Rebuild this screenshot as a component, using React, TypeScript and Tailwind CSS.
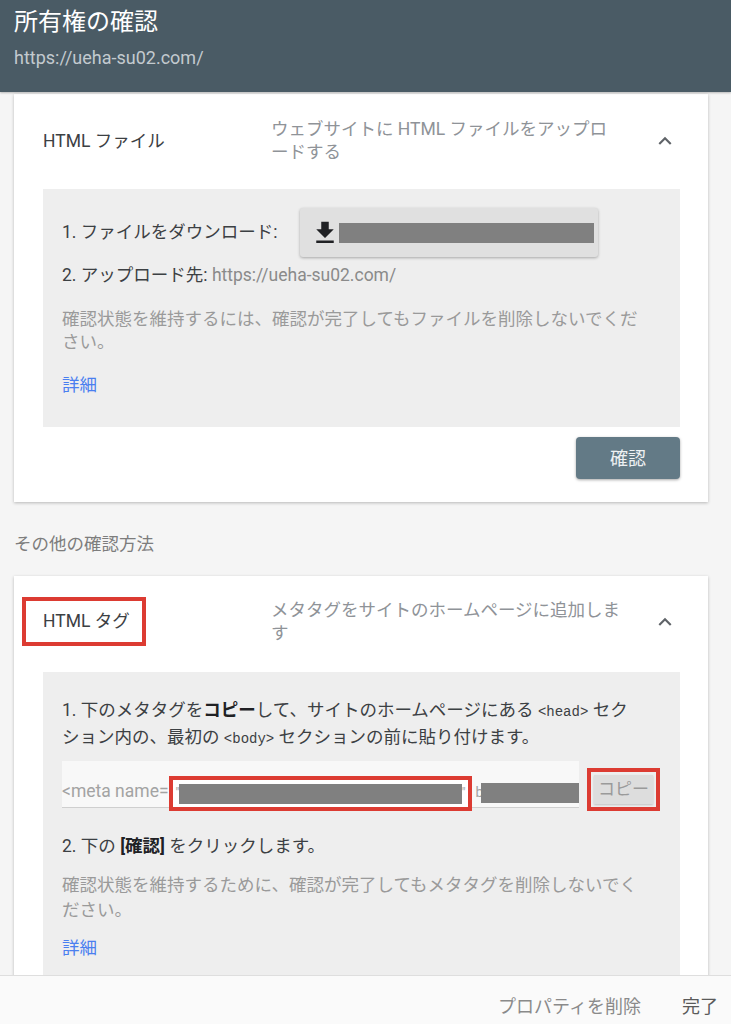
const font = "font-['Roboto','Noto_Sans_CJK_JP',sans-serif]"

function ExpandLess() {
  return (
    <svg viewBox="0 0 24 24" className="w-[26px] h-[26px] fill-[#5f6368] shrink-0">
      <path d="M12 8l-6 6 1.41 1.41L12 10.83l4.59 4.58L18 14z" />
    </svg>
  )
}

function DownloadIcon() {
  return (
    <svg viewBox="0 0 24 24" className="w-[30px] h-[30px] fill-[#202124] shrink-0">
      <path d="M19 9h-4V3H9v6H5l7 7 7-7zM5 18v2h14v-2H5z" />
    </svg>
  )
}

export default function App() {
  return (
    <div className={`${font} h-[1024px] w-full flex flex-col overflow-hidden bg-[#f5f5f5] text-[17.5px] leading-[23px] text-[#3c4043]`}>
      {/* header */}
      <header className="h-[92px] shrink-0 bg-[#4a5b65] px-[14px] pt-[6px] shadow-[0_1px_2px_rgba(0,0,0,0.25)] z-10">
        <h1 className="text-[24px] leading-[32px] text-white">所有権の確認</h1>
        <p className="mt-[8px] text-[18px] leading-[24px] text-[#c3cacf]">https://ueha-su02.com/</p>
      </header>

      <main className="flex-1 overflow-hidden pl-[14px] pr-[23px]">
        {/* html file card */}
        <section className="mt-[2px] bg-white pl-[29px] pr-[28px] pt-[24px] pb-[23px] shadow-[0_1px_3px_rgba(0,0,0,0.25)]">
          <div className="flex items-center">
            <div className="w-[228px] shrink-0">HTML ファイル</div>
            <div className="flex-1 text-[#8f9398]">
              ウェブサイトに HTML ファイルをアップロ
              <br />
              ードする
            </div>
            <div className="mr-[2px]">
              <ExpandLess />
            </div>
          </div>

          <div className="mt-[25px] bg-[#eeeeee] pl-[19px] pr-[20px] pt-[19px] pb-[30px]">
            <div className="flex items-center gap-[22px]">
              <span>1. ファイルをダウンロード:</span>
              <button className="flex h-[49px] w-[298px] items-center rounded-[3px] bg-[#e0e0e0] pl-[10px] pr-[4px] shadow-[0_1px_3px_rgba(0,0,0,0.3)]">
                <DownloadIcon />
                <span className="ml-[-1px] h-[20px] flex-1 bg-[#808080]" />
              </button>
            </div>
            <p className="mt-[7px]">
              2. アップロード先: <span className="text-[#8a8a8a]">https://ueha-su02.com/</span>
            </p>
            <p className="mt-[21px] text-[#9a9a9a]">
              確認状態を維持するには、確認が完了してもファイルを削除しないでくだ
              <br />
              さい。
            </p>
            <a className="mt-[20px] block text-[#4a7ff0]">詳細</a>
          </div>

          <div className="mt-[10px] flex justify-end">
            <button className="h-[42px] w-[104px] rounded-[4px] bg-[#637a86] text-[18px] text-[#eef1f3] shadow-[0_1px_3px_rgba(0,0,0,0.35)]">
              確認
            </button>
          </div>
        </section>

        <p className="mt-[31px] text-[#7d7d7d]">その他の確認方法</p>

        {/* html tag card */}
        <section className="mt-[20px] bg-white pl-[29px] pr-[28px] pt-[21px] pb-[40px] shadow-[0_1px_3px_rgba(0,0,0,0.25)]">
          <div className="flex items-center">
            <div className="w-[228px] shrink-0">
              <span className="ml-[-21px] inline-block border-4 border-[#dc3b32] pl-[17px] pr-[12px] py-[9px]">HTML タグ</span>
            </div>
            <div className="flex-1 text-[#8f9398]">
              メタタグをサイトのホームページに追加しま
              <br />
              す
            </div>
            <div className="mr-[2px]">
              <ExpandLess />
            </div>
          </div>

          <div className="mt-[26px] bg-[#eeeeee] pl-[19px] pr-[20px] pt-[26px] pb-[30px]">
            <p className="leading-[25px]">
              1. 下のメタタグを<b className="font-bold text-[#202124]">コピー</b>して、サイトのホームページにある{" "}
              <code className="font-['Liberation_Mono',monospace] text-[14px]">&lt;head&gt;</code> セク
              <br />
              ション内の、最初の <code className="font-['Liberation_Mono',monospace] text-[14px]">&lt;body&gt;</code>{" "}
              セクションの前に貼り付けます。
            </p>

            <div className="mt-[9px] flex items-start gap-[8px]">
              <div className="flex h-[47px] w-[518px] items-end border-b border-[#cfcfcf] bg-[#f8f8f8] pb-[2px] text-[#a3a3a3]">
                <span className="mb-[2px] whitespace-nowrap">&lt;meta name=</span>
                <span className="-mb-[6px] flex h-[35px] w-[303px] shrink-0 items-center border-4 border-[#dc3b32] bg-white pl-[3px] pr-[2px]">
                  <span className="text-[12px]">"</span>
                  <span className="h-[20px] flex-1 bg-[#808080]" />
                  <span className="text-[12px]">"</span>
                </span>
                <span className="mb-[1px] ml-[4px] text-[14px]">b</span>
                <span className="mb-[2px] ml-[-2px] h-[20px] flex-1 bg-[#808080]" />
              </div>
              <div className="mt-[7px] border-4 border-[#dc3b32] p-[3px]">
                <button className="h-[29px] w-[59px] bg-[#dddddd] text-[17px] text-[#9a9a9a] shadow-[0_1px_2px_rgba(0,0,0,0.2)]">
                  コピー
                </button>
              </div>
            </div>

            <p className="mt-[24px]">
              2. 下の <b className="font-bold text-[#202124]">[確認]</b> をクリックします。
            </p>
            <p className="mt-[15px] leading-[25px] text-[#9a9a9a]">
              確認状態を維持するために、確認が完了してもメタタグを削除しないでく
              <br />
              ださい。
            </p>
            <a className="mt-[14px] block text-[#4a7ff0]">詳細</a>
          </div>
        </section>
      </main>

      {/* footer */}
      <footer className="h-[49px] shrink-0 flex items-start justify-end gap-[41px] border-t border-[#dedede] bg-[#fafafa] pr-[13px] pt-[19px] text-[18px] z-10">
        <span className="text-[#8a8a8a]">プロパティを削除</span>
        <span className="text-[#5a5a5a]">完了</span>
      </footer>
    </div>
  )
}
